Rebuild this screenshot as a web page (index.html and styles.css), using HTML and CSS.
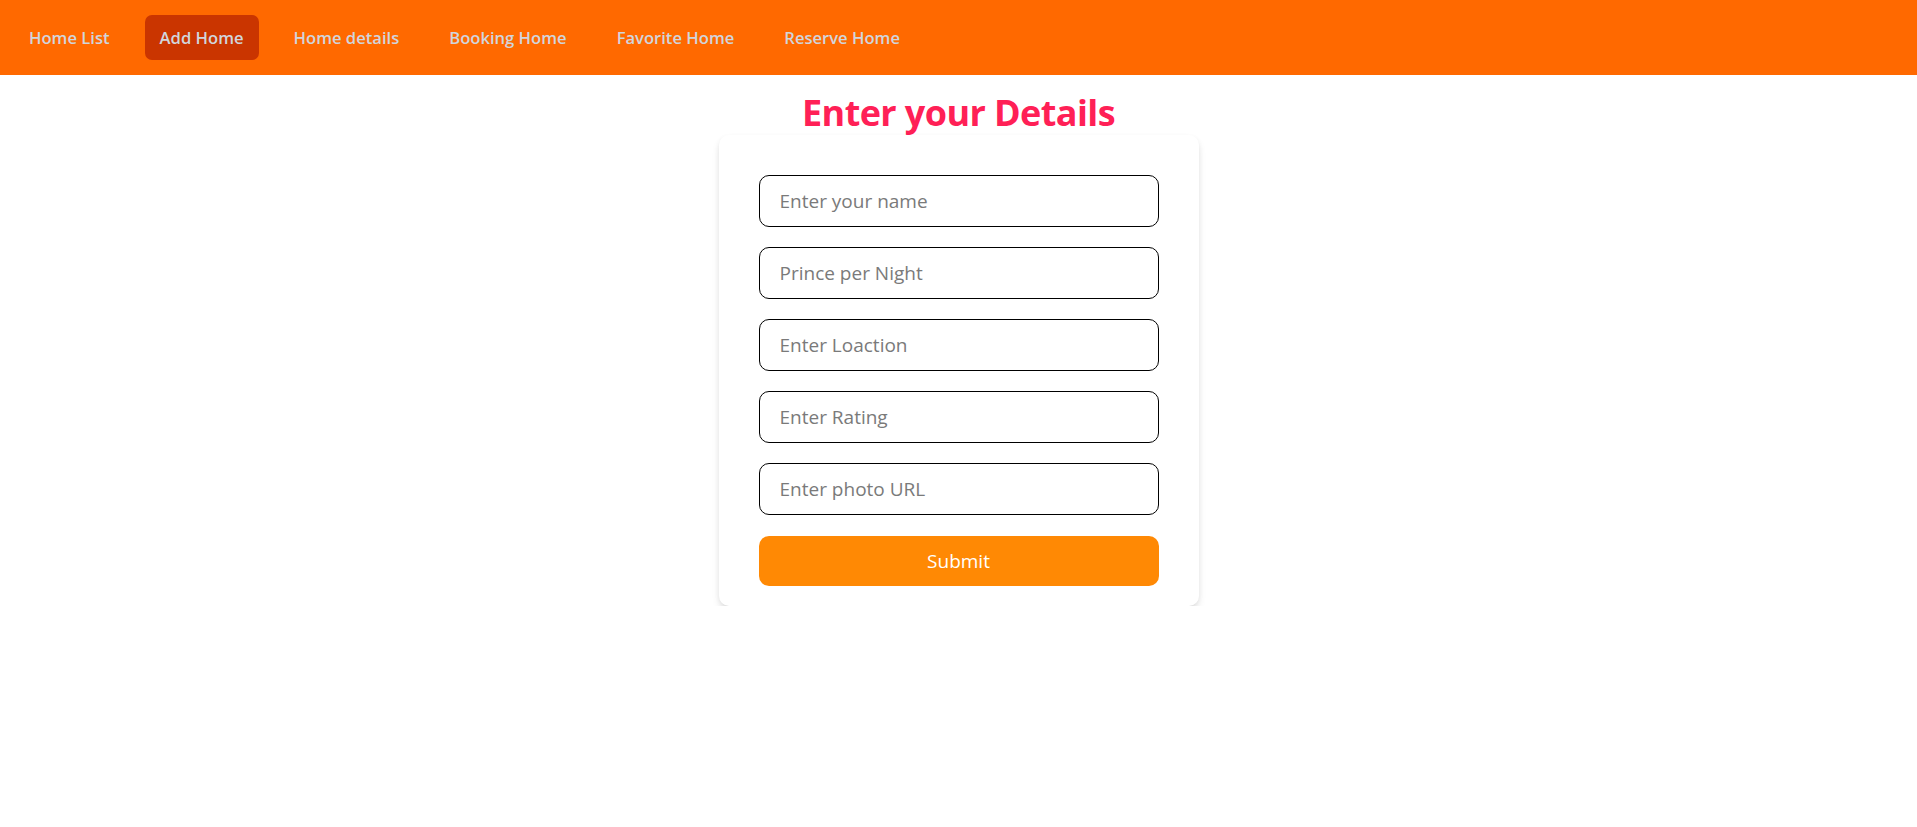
FILE: index.html
```html
<!DOCTYPE html>
<html lang="en">
<head>
<meta charset="utf-8">
<title>Add Home</title>
<link rel="stylesheet" href="styles.css">
</head>
<body>
<nav class="navbar">
  <ul class="nav-list">
    <li><a class="nav-link" href="#">Home List</a></li>
    <li><a class="nav-link active" href="#">Add Home</a></li>
    <li><a class="nav-link" href="#">Home details</a></li>
    <li><a class="nav-link" href="#">Booking Home</a></li>
    <li><a class="nav-link" href="#">Favorite Home</a></li>
    <li><a class="nav-link" href="#">Reserve Home</a></li>
  </ul>
</nav>
<main class="main">
  <h1 class="title">Enter your Details</h1>
  <form class="card">
    <input class="field" type="text" placeholder="Enter your name">
    <input class="field" type="text" placeholder="Prince per Night">
    <input class="field" type="text" placeholder="Enter Loaction">
    <input class="field" type="text" placeholder="Enter Rating">
    <input class="field" type="text" placeholder="Enter photo URL">
    <button class="submit" type="submit">Submit</button>
  </form>
</main>
</body>
</html>
```
FILE: styles.css
```css
* { box-sizing: border-box; }
html, body { margin: 0; padding: 0; background: #fff; }
body { font-family: "Open Sans", "Noto Sans", sans-serif; }

.navbar {
  height: 75px;
  background: #ff6900;
  display: flex;
  align-items: center;
  padding: 0 14px;
}
.nav-list {
  list-style: none;
  margin: 0;
  padding: 0;
  display: flex;
  gap: 20px;
}
.nav-link {
  display: block;
  padding: 0 15px;
  height: 45px;
  line-height: 45px;
  border-radius: 7px;
  color: #d1d5dc;
  font-size: 16.6px;
  font-weight: 600;
  text-decoration: none;
}
.nav-link.active { background: #ca3500; }

.main {
  display: flex;
  flex-direction: column;
  align-items: center;
}
.title {
  margin: 15px 0 0;
  font-size: 36px;
  line-height: 45px;
  font-weight: 700;
  color: #ff2056;
  letter-spacing: -0.6px;
}
.card {
  width: 480px;
  background: #fff;
  border-radius: 10px;
  box-shadow: 0 5px 10px -2px rgba(0,0,0,0.14), 0 2px 6px -2px rgba(0,0,0,0.1);
  padding: 40px 40px 20px;
  display: flex;
  flex-direction: column;
  gap: 20px;
}
.field {
  width: 400px;
  height: 52px;
  border: 1px solid #000;
  border-radius: 10px;
  padding: 0 20px;
  font-family: inherit;
  font-size: 19px;
  color: #111;
  outline: none;
}
.field::placeholder { color: #7a7a7a; }
.submit {
  width: 400px;
  height: 50px;
  margin-top: 1px;
  border: none;
  border-radius: 10px;
  background: #ff8904;
  color: #fff;
  font-family: inherit;
  font-size: 19px;
  cursor: pointer;
}
```
